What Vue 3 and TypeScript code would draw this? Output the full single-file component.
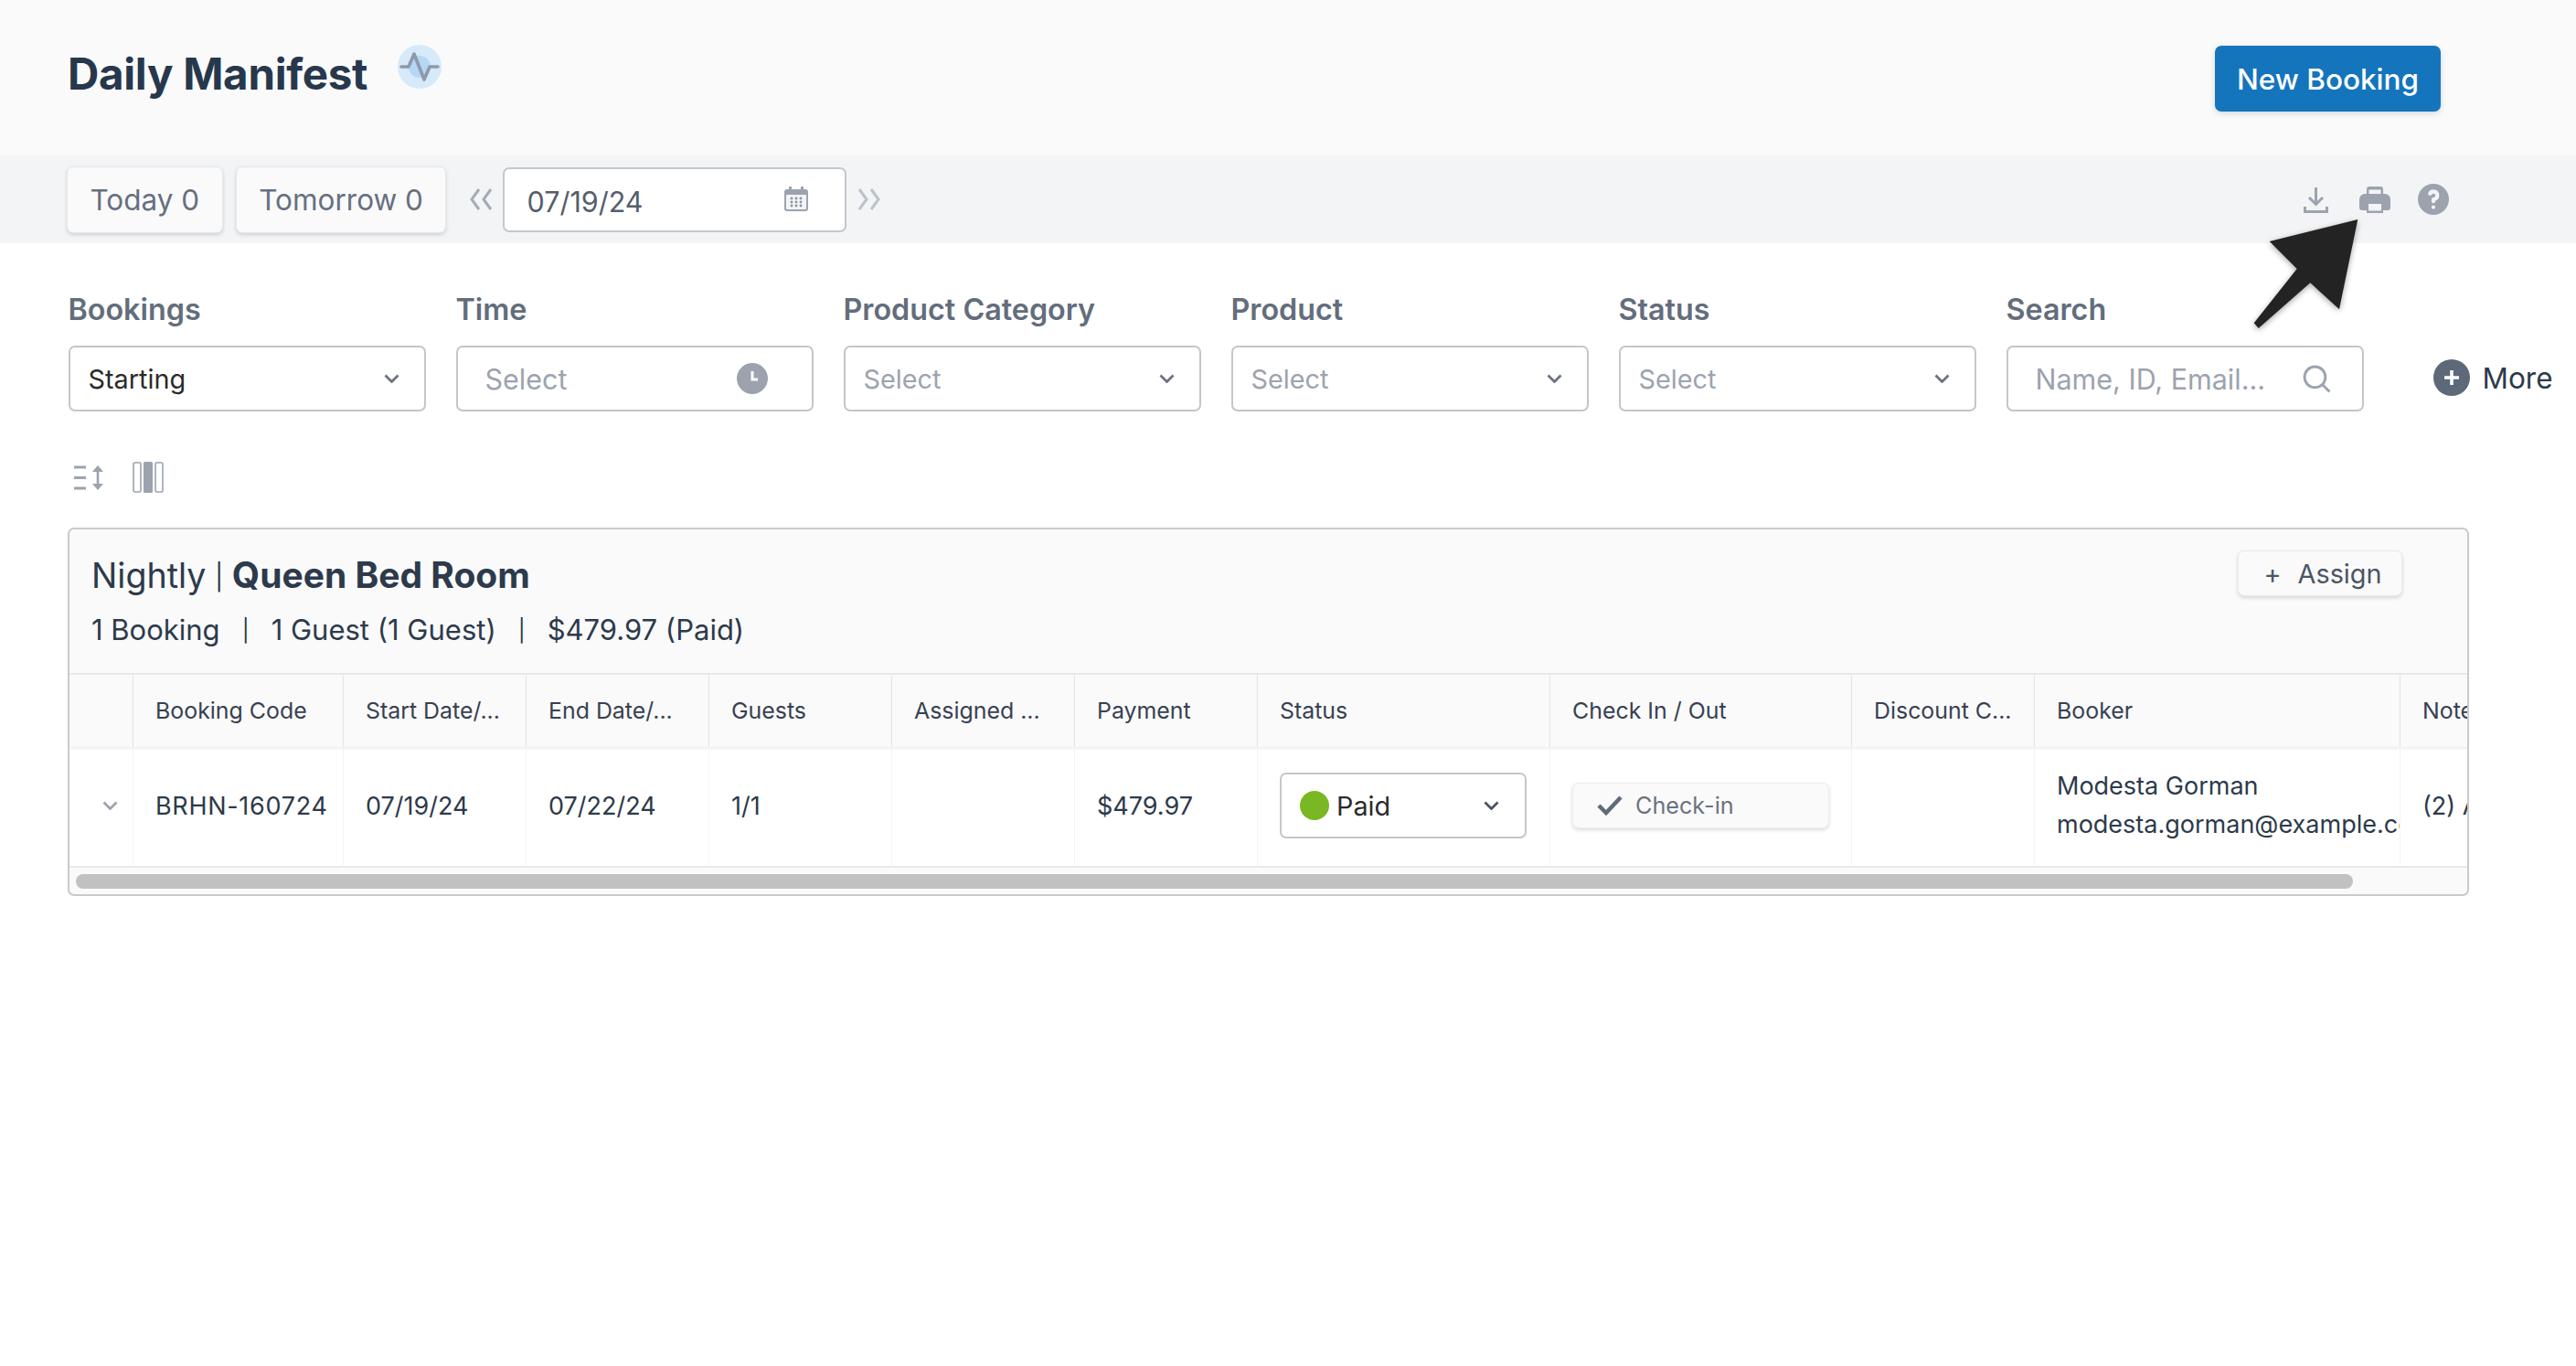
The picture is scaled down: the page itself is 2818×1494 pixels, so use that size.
<script setup lang="ts">
const filters = [
  { label: 'Bookings', value: 'Starting', kind: 'select' },
  { label: 'Time', value: 'Select', kind: 'time' },
  { label: 'Product Category', value: 'Select', kind: 'select' },
  { label: 'Product', value: 'Select', kind: 'select' },
  { label: 'Status', value: 'Select', kind: 'select' },
  { label: 'Search', value: 'Name, ID, Email...', kind: 'search' }
]

const columns = [
  { name: '', width: 70 },
  { name: 'Booking Code', width: 230 },
  { name: 'Start Date/...', width: 200 },
  { name: 'End Date/...', width: 200 },
  { name: 'Guests', width: 200 },
  { name: 'Assigned ...', width: 200 },
  { name: 'Payment', width: 200 },
  { name: 'Status', width: 320 },
  { name: 'Check In / Out', width: 330 },
  { name: 'Discount C...', width: 200 },
  { name: 'Booker', width: 400 },
  { name: 'Notes', width: 300 }
]

const tableWidth = columns.reduce((sum, c) => sum + c.width, 0)
</script>

<template>
  <div class="page">
    <header class="top">
      <div class="title-wrap">
        <h1>Daily Manifest</h1>
        <svg class="pulse" viewBox="0 0 48 48" width="48" height="48">
          <circle cx="24" cy="24" r="24" fill="#d6eafa" />
          <circle cx="24" cy="24" r="12" fill="#b4d8f4" />
          <path d="M4 24h8l6-14 11 28 6-14h9" fill="none" stroke="#8e9aab" stroke-width="3.6" stroke-linecap="round" stroke-linejoin="round" />
        </svg>
      </div>
      <button class="primary">New Booking</button>
    </header>

    <div class="toolbar">
      <button class="pill">Today 0</button>
      <button class="pill">Tomorrow 0</button>
      <svg class="dbl" viewBox="0 0 25 24" width="25" height="24">
        <path d="M10 1 2 12l8 11M23 1l-8 11 8 11" fill="none" stroke="#a4acb8" stroke-width="3" />
      </svg>
      <div class="date-box">
        <span class="date-text">07/19/24</span>
        <svg viewBox="0 0 28 28" width="28" height="28">
          <rect x="1" y="3" width="26" height="24" rx="3" fill="#9ca3af" />
          <rect x="6" y="0" width="3" height="5" fill="#9ca3af" />
          <rect x="19" y="0" width="3" height="5" fill="#9ca3af" />
          <rect x="3" y="9" width="22" height="16" rx="1" fill="#f3f4f6" />
          <g fill="#8b93a1">
            <circle cx="9" cy="13" r="1.4" /><circle cx="14" cy="13" r="1.4" /><circle cx="19" cy="13" r="1.4" />
            <circle cx="9" cy="17" r="1.4" /><circle cx="14" cy="17" r="1.4" /><circle cx="19" cy="17" r="1.4" />
            <circle cx="9" cy="21" r="1.4" /><circle cx="14" cy="21" r="1.4" /><circle cx="19" cy="21" r="1.4" />
          </g>
        </svg>
      </div>
      <svg class="dbl next" viewBox="0 0 25 24" width="25" height="24">
        <path d="m2 1 8 11-8 11M15 1l8 11-8 11" fill="none" stroke="#bcc2cc" stroke-width="3" />
      </svg>

      <div class="tools">
        <svg viewBox="0 0 27 29" width="27" height="29" class="ic-down">
          <path d="M13.500 1v18M6 12l7.500 7.500L21 12" fill="none" stroke="#9ca3af" stroke-width="3" />
          <path d="M1.500 22v5.500h24V22" fill="none" stroke="#9ca3af" stroke-width="3" />
        </svg>
        <svg viewBox="0 0 34 30" width="34" height="30" class="ic-print">
          <path d="M8 9V4a3 3 0 0 1 3-3h12a3 3 0 0 1 3 3v5h2a6 6 0 0 1 6 6v9a3 3 0 0 1-3 3h-5v3H8v-3H3a3 3 0 0 1-3-3v-9a6 6 0 0 1 6-6zm2.500-4.500V9h13V4.500zM10 20v7.500h14V20z" fill="#9ca3af" fill-rule="evenodd" />
        </svg>
        <svg viewBox="2 2 16 16" width="34" height="34">
          <path fill="#9ca3af" fill-rule="evenodd" clip-rule="evenodd" d="M18 10a8 8 0 11-16 0 8 8 0 0116 0zm-8-3a1 1 0 00-.867.5 1 1 0 11-1.731-1A3 3 0 0113 8a3.001 3.001 0 01-2 2.83V11a1 1 0 11-2 0v-1a1 1 0 011-1 1 1 0 100-2zm0 8a1 1 0 100-2 1 1 0 000 2z" />
        </svg>
      </div>
    </div>

    <section class="filters">
      <div v-for="f in filters" :key="f.label" class="filter">
        <label>{{ f.label }}</label>
        <div class="field" :class="f.kind">
          <span :class="{ placeholder: f.value !== 'Starting' }">{{ f.value }}</span>
          <svg v-if="f.kind === 'select'" class="chev" viewBox="0 0 17 10" width="17" height="10">
            <path d="m1.500 1.500 7 7 7-7" fill="none" stroke="#6b7280" stroke-width="2.800" />
          </svg>
          <svg v-else-if="f.kind === 'time'" class="clock" viewBox="0 0 34 34" width="34" height="34">
            <circle cx="17" cy="17" r="17" fill="#9ca3af" />
            <path d="M17 9v9h6" fill="none" stroke="#fff" stroke-width="3" />
          </svg>
          <svg v-else class="lens" viewBox="0 0 30 30" width="31" height="31">
            <circle cx="13" cy="13" r="11" fill="none" stroke="#9ca3af" stroke-width="2.800" />
            <path d="m21 21 7.500 7.500" stroke="#9ca3af" stroke-width="2.800" />
          </svg>
        </div>
      </div>
      <div class="more">
        <svg viewBox="0 0 40 40" width="40" height="40">
          <circle cx="20" cy="20" r="20" fill="#5d6879" />
          <path d="M20 12v16M12 20h16" stroke="#fff" stroke-width="3.600" />
        </svg>
        <span>More</span>
      </div>
    </section>

    <div class="view-tools">
      <svg viewBox="0 0 34 29" width="34" height="29">
        <path d="M0 3h13M0 14.500h13M0 26h13" stroke="#9ca3af" stroke-width="3" />
        <path d="M26 3v23" stroke="#9ca3af" stroke-width="2.600" />
        <path d="m20 8 6-7 6 7zM20 21l6 7 6-7z" fill="#9ca3af" />
      </svg>
      <svg viewBox="0 0 34 34" width="34" height="34">
        <rect x="1" y="1" width="8" height="32" rx="1.500" fill="none" stroke="#9ca3af" stroke-width="1.600" />
        <rect x="12" y="0" width="10" height="34" rx="1.500" fill="#9ca3af" />
        <rect x="25" y="1" width="8" height="32" rx="1.500" fill="none" stroke="#9ca3af" stroke-width="1.600" />
      </svg>
    </div>

    <section class="card">
      <div class="card-head">
        <div>
          <h2>Nightly <span class="sep">|</span> <b>Queen Bed Room</b></h2>
          <p class="stats">1 Booking<i>|</i>1 Guest (1 Guest)<i>|</i>$479.97 (Paid)</p>
        </div>
        <button class="assign"><span class="plus">+</span>Assign</button>
      </div>

      <div class="table-clip">
        <table :style="{ width: tableWidth + 'px' }">
          <colgroup>
            <col v-for="c in columns" :key="c.name" :style="{ width: c.width + 'px' }" />
          </colgroup>
          <thead>
            <tr>
              <th v-for="c in columns" :key="c.name">{{ c.name }}</th>
            </tr>
          </thead>
          <tbody>
            <tr>
              <td class="toggle">
                <svg viewBox="0 0 17 10" width="17" height="10">
                  <path d="m1.500 1.500 7 7 7-7" fill="none" stroke="#9ca3af" stroke-width="2.800" />
                </svg>
              </td>
              <td class="code">BRHN-160724</td>
              <td>07/19/24</td>
              <td>07/22/24</td>
              <td>1/1</td>
              <td></td>
              <td>$479.97</td>
              <td>
                <div class="paid">
                  <span class="dot"></span>
                  <span class="paid-label">Paid</span>
                  <svg viewBox="0 0 17 10" width="17" height="10">
                    <path d="m1.500 1.500 7 7 7-7" fill="none" stroke="#4b5563" stroke-width="2.800" />
                  </svg>
                </div>
              </td>
              <td>
                <button class="checkin">
                  <svg viewBox="0 0 28 22" width="28" height="22">
                    <path d="m2 11 8 8L26 2" fill="none" stroke="#5f6b7a" stroke-width="4.500" />
                  </svg>
                  Check-in
                </button>
              </td>
              <td></td>
              <td class="booker">Modesta Gorman<br />modesta.gorman@example.com</td>
              <td>(2) Addons</td>
            </tr>
          </tbody>
        </table>
      </div>

      <div class="scroll-track">
        <div class="scroll-thumb"></div>
      </div>
    </section>

    <!-- annotation arrow pasted over the screenshot -->
    <svg class="arrow" viewBox="0 0 120 125" width="120" height="125">
      <polygon points="114.300,1 17.700,25 47.700,55 0.700,114.300 5.700,120 62.300,70.300 94,99.300" fill="#232323" />
    </svg>
  </div>
</template>

<style scoped>
.page {
  position: relative;
  width: 2818px;
  min-height: 1494px;
  background: #fff;
  font-family: Inter, "Liberation Sans", sans-serif;
  color: #2d3a4b;
}

button {
  font-family: inherit;
  cursor: pointer;
}

.top {
  height: 170px;
  box-sizing: border-box;
  display: flex;
  align-items: center;
  justify-content: space-between;
  padding: 0 148px 0 74px;
  background: #fafafb;
}

.title-wrap {
  display: flex;
  align-items: center;
  gap: 33px;
  margin-top: -10px;
}

h1 {
  margin: 0;
  font-size: 47.500px;
  font-weight: 700;
  letter-spacing: -0.3px;
  color: #27384d;
}

.pulse {
  margin-top: -14px;
}

.primary {
  width: 247px;
  height: 72px;
  margin-top: 2px;
  border: none;
  border-radius: 7px;
  background: #1475bc;
  color: #fff;
  font-size: 31.500px;
  font-weight: 500;
  box-shadow: 0 2px 6px rgba(0, 0, 0, 0.15);
}

.toolbar {
  height: 96px;
  box-sizing: border-box;
  display: flex;
  align-items: center;
  padding: 0 139px 0 73px;
  background: #f3f4f6;
}

.pill {
  height: 73px;
  padding: 1px 24.500px 0;
  margin-right: 14px;
  border: 1px solid #e5e7eb;
  border-radius: 7px;
  background: #fafafb;
  color: #667080;
  font-size: 31.500px;
  box-shadow: 0 2px 4px rgba(0, 0, 0, 0.14);
}

.dbl {
  margin: 0 11px 0 12px;
}

.dbl.next {
  margin: 0;
}

.date-box {
  width: 376px;
  height: 71px;
  box-sizing: border-box;
  display: flex;
  align-items: center;
  justify-content: space-between;
  padding: 0 39px 0 24px;
  margin-right: 12px;
  background: #fff;
  border: 2px solid #c4c6ca;
  border-radius: 7px;
  color: #555e6c;
  font-size: 30.500px;
}

.date-text {
  margin-top: 5px;
}

.tools {
  margin-left: auto;
  display: flex;
  align-items: center;
  gap: 30px;
}

.ic-down {
  margin-right: 4px;
}

.filters {
  display: flex;
  padding: 53px 0 0 74.500px;
  gap: 32.500px;
}

.filter {
  width: 391.500px;
}

label {
  display: block;
  margin-bottom: 20px;
  font-size: 32.300px;
  font-weight: 600;
  line-height: 39px;
  color: #636d7c;
}

.field {
  height: 72px;
  box-sizing: border-box;
  display: flex;
  align-items: center;
  justify-content: space-between;
  padding: 0 27px 0 20px;
  border: 2px solid #c4c6ca;
  border-radius: 7px;
  font-size: 28.800px;
  color: #2b2b2b;
}

.field.time,
.field.search {
  font-size: 30.500px;
  padding: 0 48px 0 30px;
}

.field.search {
  padding-right: 34px;
}

.placeholder {
  color: #9ca3af;
}

.more {
  display: flex;
  align-items: center;
  gap: 14px;
  margin: 74px 0 0 43px;
  height: 40px;
  font-size: 31.500px;
  color: #2d3a4b;
}

.view-tools {
  display: flex;
  align-items: center;
  gap: 30px;
  height: 34px;
  padding: 55px 0 0 81px;
}

.card {
  width: 2627px;
  box-sizing: border-box;
  margin: 38px 0 0 74px;
  border: 2px solid #c8cacd;
  border-radius: 7px;
  overflow: hidden;
  background: #fafafb;
}

.card-head {
  height: 159px;
  box-sizing: border-box;
  display: flex;
  justify-content: space-between;
  padding: 25px 71px 0 24px;
  border-bottom: 2px solid #e7e8ea;
}

h2 {
  margin: 0;
  font-size: 37.600px;
  font-weight: 400;
  line-height: 50px;
  word-spacing: -1px;
  color: #2d3a4b;
}

h2 b {
  font-size: 39px;
  font-weight: 700;
  word-spacing: 0;
}

.sep {
  font-size: 28px;
  vertical-align: 2px;
}

.stats {
  margin: 13px 0 0;
  font-size: 31px;
  line-height: 40px;
  color: #2d3a4b;
}

.stats i {
  font-style: normal;
  font-size: 24px;
  vertical-align: 2px;
  margin: 0 24px;
}

.assign {
  height: 50px;
  width: 180px;
  padding-left: 12px;
  margin-top: -2px;
  border: 1px solid #e9eaec;
  border-radius: 7px;
  background: #fafafb;
  color: #4b5563;
  font-size: 28.800px;
  box-shadow: 0 2px 4px rgba(0, 0, 0, 0.14);
}

.plus {
  margin-right: 18px;
}

.table-clip {
  overflow: hidden;
}

table {
  table-layout: fixed;
  border-collapse: separate;
  border-spacing: 0;
  background: #fff;
}

th {
  height: 79px;
  box-sizing: border-box;
  padding: 0 24px 2px;
  text-align: left;
  font-size: 24.900px;
  font-weight: 400;
  white-space: nowrap;
  overflow: hidden;
  color: #374151;
  background: #fafafb;
  border-right: 1px solid #e9eaec;
  box-shadow: 0 2px 3px rgba(0, 0, 0, 0.07);
}

td {
  height: 132px;
  box-sizing: border-box;
  padding: 0 24px 2px;
  font-size: 27px;
  white-space: nowrap;
  overflow: hidden;
  color: #2d3a4b;
  border-right: 1px solid #f3f4f6;
  border-bottom: 2px solid #e7e8ea;
}

.code {
  letter-spacing: 0.7px;
}

.toggle {
  padding: 0 0 2px 36px;
}

.toggle svg {
  display: block;
}

.paid {
  width: 270px;
  height: 72px;
  box-sizing: border-box;
  display: flex;
  align-items: center;
  padding: 0 28px 0 20px;
  border: 2px solid #c4c6ca;
  border-radius: 7px;
  background: #fff;
}

.dot {
  width: 32px;
  height: 32px;
  border-radius: 50%;
  background: #7ab823;
}

.paid-label {
  flex: 1;
  margin-left: 8px;
  font-size: 28.800px;
  color: #2b2b2b;
}

.checkin {
  width: 281px;
  height: 50px;
  display: flex;
  align-items: center;
  gap: 14px;
  padding: 0 0 0 26px;
  border: 1px solid #eceded;
  border-radius: 7px;
  background: #fafafb;
  color: #6b7280;
  font-size: 25.200px;
  box-shadow: 0 2px 4px rgba(0, 0, 0, 0.14);
}

.booker {
  line-height: 42px;
}

.scroll-track {
  height: 29px;
  box-sizing: border-box;
  padding: 7px 0 0 7px;
}

.scroll-thumb {
  width: 2491px;
  height: 16px;
  border-radius: 8px;
  background: #c1c1c1;
}

.arrow {
  position: absolute;
  left: 2465px;
  top: 239px;
  filter: drop-shadow(0 2px 3px rgba(0, 0, 0, 0.35));
}
</style>
